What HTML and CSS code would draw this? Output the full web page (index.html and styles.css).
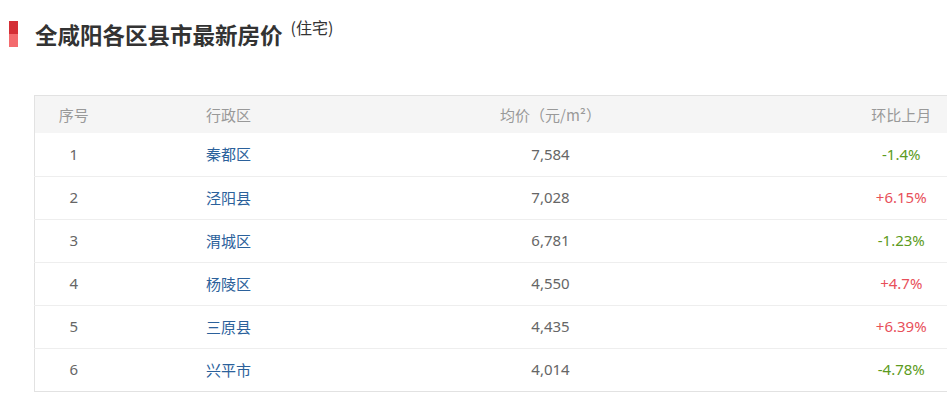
FILE: index.html
```html
<!DOCTYPE html>
<html lang="zh-CN">
<head>
<meta charset="utf-8">
<title>全咸阳各区县市最新房价</title>
<link rel="stylesheet" href="styles.css">
</head>
<body>
<div class="page">
  <div class="heading">
    <span class="bar"><span class="bar-top"></span><span class="bar-bottom"></span></span>
    <h2 class="title">全咸阳各区县市最新房价</h2>
    <span class="sub">(住宅)</span>
  </div>
  <table class="price-table">
    <colgroup>
      <col class="c1"><col class="c2"><col class="c3"><col class="c4">
    </colgroup>
    <thead>
      <tr><th>序号</th><th>行政区</th><th>均价（元/m²）</th><th>环比上月</th></tr>
    </thead>
    <tbody>
      <tr><td>1</td><td class="area">秦都区</td><td>7,584</td><td class="down">-1.4%</td></tr>
      <tr><td>2</td><td class="area">泾阳县</td><td>7,028</td><td class="up">+6.15%</td></tr>
      <tr><td>3</td><td class="area">渭城区</td><td>6,781</td><td class="down">-1.23%</td></tr>
      <tr><td>4</td><td class="area">杨陵区</td><td>4,550</td><td class="up">+4.7%</td></tr>
      <tr><td>5</td><td class="area">三原县</td><td>4,435</td><td class="up">+6.39%</td></tr>
      <tr><td>6</td><td class="area">兴平市</td><td>4,014</td><td class="down">-4.78%</td></tr>
    </tbody>
  </table>
</div>
</body>
</html>
```
FILE: styles.css
```css
html, body {
  margin: 0;
  padding: 0;
  background: #fff;
  overflow: hidden;
}
body {
  font-family: "Noto Sans", "Noto Sans CJK SC", sans-serif;
  font-size: 15px;
  color: #666;
}
.page {
  width: 1100px;
}
.heading {
  display: flex;
  align-items: flex-start;
  padding-left: 9px;
  padding-top: 21px;
  height: 26px;
}
.bar {
  display: flex;
  flex-direction: column;
  width: 9px;
  height: 26px;
}
.bar-top {
  height: 13px;
  background: #d42f36;
}
.bar-bottom {
  height: 13px;
  background: #f36b6e;
}
.title {
  margin: 0 0 0 17px;
  font-family: "Noto Sans CJK SC", sans-serif;
  font-size: 22.5px;
  font-weight: bold;
  line-height: 26px;
  color: #333;
}
.sub {
  margin-left: 8px;
  margin-top: -4px;
  font-family: "Noto Sans CJK SC", sans-serif;
  font-size: 16px;
  color: #333;
  line-height: 20px;
}
.price-table {
  margin: 48px 0 0 34px;
  border-collapse: collapse;
  border: 1px solid #e2e2e2;
  width: 1012px;
  table-layout: fixed;
}
.c1 { width: 78px; }
.c2 { width: 232px; }
.c3 { width: 412px; }
.c4 { width: 290px; }
.price-table th {
  background: #f5f5f5;
  font-weight: normal;
  color: #999;
  height: 37px;
  padding: 0;
  text-align: center;
  font-family: "Noto Sans CJK SC", sans-serif;
}
.price-table td {
  height: 40px;
  padding: 0 0 2px;
  text-align: center;
  border-top: 1px solid #eeeeee;
  color: #666;
}
.price-table tbody tr:first-child td {
  border-top: none;
  height: 41px;
}
.price-table td.area {
  color: #2b619b;
  font-family: "Noto Sans CJK SC", sans-serif;
}
.price-table td.down {
  color: #5c9b21;
}
.price-table td.up {
  color: #e8505a;
}
```
